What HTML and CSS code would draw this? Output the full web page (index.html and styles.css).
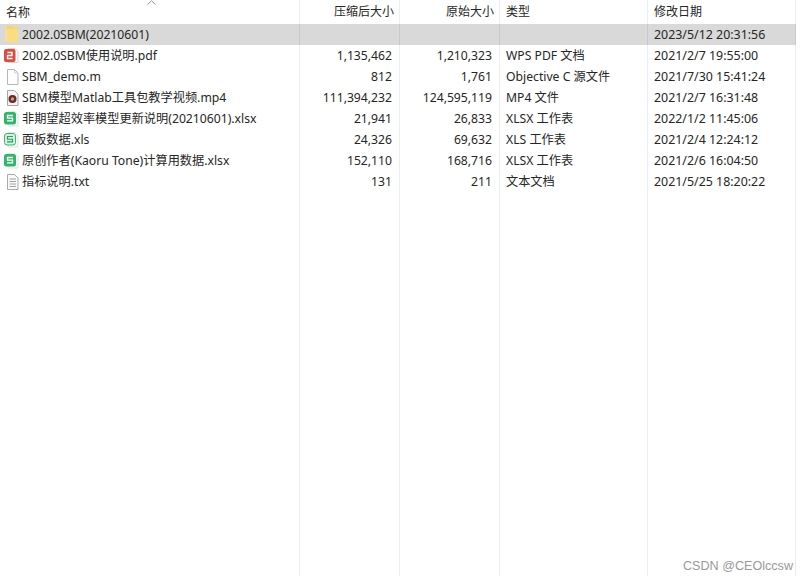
FILE: index.html
```html
<!DOCTYPE html>
<html lang="zh">
<head>
<meta charset="utf-8">
<title>压缩包</title>
<link rel="stylesheet" href="styles.css">
</head>
<body>
<div class="list">
  <svg class="arrow" width="9" height="5" viewBox="0 0 9 5"><path d="M.5 4.500 4.500.8l4 3.700" fill="none" stroke="#8f959b"/></svg>
  <div class="cols">
    <div class="col"></div><div class="col"></div><div class="col"></div><div class="col"></div><div class="col"></div>
  </div>
  <div class="row head">
    <div class="name">名称</div><div class="num">压缩后大小</div><div class="num">原始大小</div><div class="txt">类型</div><div class="txt">修改日期</div>
  </div>
  <div class="row sel">
    <div class="name"><svg class="ic" viewBox="0 0 18 21"><path d="M2 2h7.500l1.500 1.500h3V18H2z" fill="#fcdc80"/><path d="M2 2v16" stroke="#f3e3b4"/><path d="M9.500 2H2v3h12V3.500h-3z" fill="#f8d470"/></svg>2002.0SBM(20210601)</div><div class="num"></div><div class="num"></div><div class="txt"></div><div class="date">2023/5/12 20:31:56</div>
  </div>
  <div class="row">
    <div class="name"><svg class="ic" viewBox="0 0 18 21"><path d="M4 3.500h7l3 3v11H4z" fill="#fff" stroke="#d9d4d2"/><rect x="0" y="4" width="11.500" height="13" rx="2" fill="#dd4a40"/><path d="M3.500 7.500h4.500v3H3.500v3h5" fill="none" stroke="#fff" stroke-width="1.300"/></svg>2002.0SBM使用说明.pdf</div><div class="num">1,135,462</div><div class="num">1,210,323</div><div class="txt">WPS PDF 文档</div><div class="date">2021/2/7 19:55:00</div>
  </div>
  <div class="row">
    <div class="name"><svg class="ic" viewBox="0 0 18 21"><path d="M3.500 3.500h7l3.500 3.500v11.500H3.500z" fill="#fdfdfd" stroke="#b4b7ba"/><path d="M10.500 3.500V7H14" fill="none" stroke="#d0d2d4"/></svg>SBM_demo.m</div><div class="num">812</div><div class="num">1,761</div><div class="txt">Objective C 源文件</div><div class="date">2021/7/30 15:41:24</div>
  </div>
  <div class="row">
    <div class="name"><svg class="ic" viewBox="0 0 18 21"><path d="M3.500 3.500h7l3.500 3.500v11.500H3.500z" fill="#f6f3f2" stroke="#aaa6a5"/><circle cx="8.500" cy="12" r="4" fill="#5f2c3a"/><circle cx="8.500" cy="12" r="1.700" fill="#ee9a35"/></svg>SBM模型Matlab工具包教学视频.mp4</div><div class="num">111,394,232</div><div class="num">124,595,119</div><div class="txt">MP4 文件</div><div class="date">2021/2/7 16:31:48</div>
  </div>
  <div class="row">
    <div class="name"><svg class="ic" viewBox="0 0 18 21"><path d="M4 3.500h7l3 3v11.500H4z" fill="#f4f8f5" stroke="#dfe7e2"/><rect x="0" y="4" width="12" height="12.500" rx="2.500" fill="#2fb66a"/><path d="M9 7.500H3.500v2.700H8.500v2.700H3" fill="none" stroke="#fff" stroke-width="1.300"/></svg>非期望超效率模型更新说明(20210601).xlsx</div><div class="num">21,941</div><div class="num">26,833</div><div class="txt">XLSX 工作表</div><div class="date">2022/1/2 11:45:06</div>
  </div>
  <div class="row">
    <div class="name"><svg class="ic" viewBox="0 0 18 21"><path d="M4 3.500h7l3 3v11.500H4z" fill="#f4f8f5" stroke="#dfe7e2"/><rect x=".5" y="4.500" width="11" height="11.500" rx="2.500" fill="#d5f0e0" stroke="#39b873"/><path d="M9 7.500H3.500v2.700H8.500v2.700H3" fill="none" stroke="#2a9d5f" stroke-width="1.100"/></svg>面板数据.xls</div><div class="num">24,326</div><div class="num">69,632</div><div class="txt">XLS 工作表</div><div class="date">2021/2/4 12:24:12</div>
  </div>
  <div class="row">
    <div class="name"><svg class="ic" viewBox="0 0 18 21"><path d="M4 3.500h7l3 3v11.500H4z" fill="#f4f8f5" stroke="#dfe7e2"/><rect x="0" y="4" width="12" height="12.500" rx="2.500" fill="#2fb66a"/><path d="M9 7.500H3.500v2.700H8.500v2.700H3" fill="none" stroke="#fff" stroke-width="1.300"/></svg>原创作者(Kaoru Tone)计算用数据.xlsx</div><div class="num">152,110</div><div class="num">168,716</div><div class="txt">XLSX 工作表</div><div class="date">2021/2/6 16:04:50</div>
  </div>
  <div class="row">
    <div class="name"><svg class="ic" viewBox="0 0 18 21"><path d="M3.500 3.500h7l3.500 3.500v11.500H3.500z" fill="#f9f9f9" stroke="#a8aaac"/><path d="M5.500 8h6.500M5.500 10.500h6.500M5.500 13h6.500M5.500 15.500h6.500" stroke="#a0a2a5"/></svg>指标说明.txt</div><div class="num">131</div><div class="num">211</div><div class="txt">文本文档</div><div class="date">2021/5/25 18:20:22</div>
  </div>
  <div class="mark">CSDN @CEOlccsw</div>
</div>
</body>
</html>
```
FILE: styles.css
```css
html, body { margin: 0; padding: 0; background: #fff; }
body { width: 808px; height: 580px; overflow: hidden; }
.list {
  position: relative;
  width: 796px;
  height: 576px;
  font-family: "Noto Sans", "Noto Sans CJK SC", sans-serif;
  font-size: 12.2px;
  color: #262626;
}
.arrow { position: absolute; left: 147px; top: 0; }
.cols {
  position: absolute;
  inset: 0;
  display: grid;
  grid-template-columns: 300px 100px 100px 148px 148px;
}
.col { border-right: 1px solid #e6eff4; }
.row {
  position: relative;
  display: grid;
  grid-template-columns: 300px 100px 100px 148px 148px;
  height: 21px;
  line-height: 21px;
  white-space: nowrap;
}
.head { height: 24px; line-height: 23px; font-size: 12px; }
.sel { background: rgba(0, 0, 0, .15); }
.name { display: flex; align-items: center; padding-left: 4px; }
.head .name { padding-left: 6px; }
.ic { width: 18px; height: 21px; flex: none; }
.num { text-align: right; padding-right: 8px; }
.head .num { padding-right: 6px; }
.txt { padding-left: 6px; }
.date { padding-left: 6px; font-size: 12.4px; }
.mark {
  position: absolute;
  right: 3px;
  bottom: 3px;
  font-family: "Liberation Sans", sans-serif;
  font-size: 12.6px;
  color: #9a9a9a;
}
```
